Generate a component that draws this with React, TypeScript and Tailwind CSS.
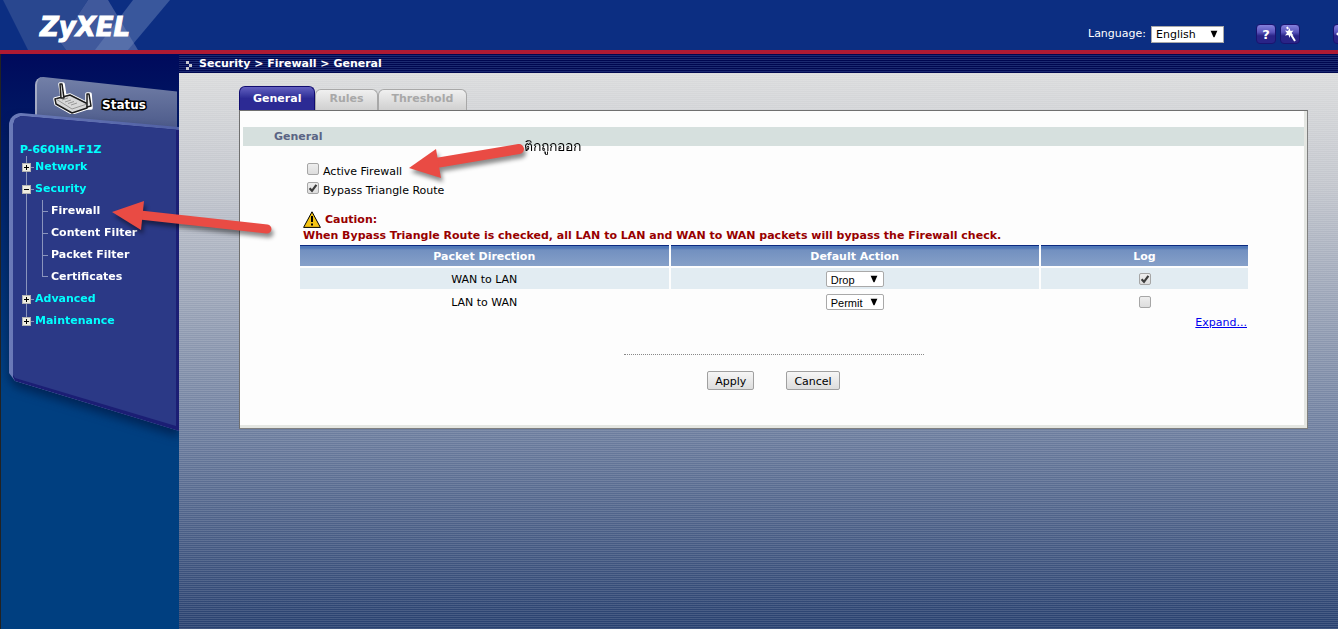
import { useState } from 'react';
import type { ReactNode, SelectHTMLAttributes } from 'react';

interface TreeItemProps {
  label: string;
  open?: boolean;
}

interface PacketRule {
  direction: string;
  action: string;
  log: boolean;
}

const RULES: PacketRule[] = [
  { direction: 'WAN to LAN', action: 'Drop', log: true },
  { direction: 'LAN to WAN', action: 'Permit', log: false },
];

const SECURITY_PAGES = ['Firewall', 'Content Filter', 'Packet Filter', 'Certificates'];

function Logo() {
  return (
    <a
      href="#home"
      className="relative mt-1 ml-10 text-[26px] leading-none font-bold italic text-white [-webkit-text-stroke:1px_white]"
    >
      ZyXEL
    </a>
  );
}

function HeaderButton({ label, children }: { label: string; children: ReactNode }) {
  return (
    <button
      type="button"
      aria-label={label}
      className="flex h-5 w-5 shrink-0 items-center justify-center rounded border border-[#1a1470] bg-linear-to-b from-[#8480dc] via-[#5a54bc] via-40% to-[#2a2488] to-60%"
    >
      {children}
    </button>
  );
}

function SelectBox({ className, ...props }: SelectHTMLAttributes<HTMLSelectElement>) {
  return (
    <span className="relative inline-flex">
      <select
        {...props}
        className={`appearance-none border border-[#a9a9a9] bg-white pl-1 text-black ${className}`}
      />
      <svg viewBox="0 0 8 7" className="pointer-events-none absolute top-1/2 right-[6px] h-[7px] w-2 -translate-y-1/2">
        <path d="M.5 0h7L4.400 7h-.8z" fill="black" />
      </svg>
    </span>
  );
}

function CheckBox({ id, label, defaultChecked }: { id: string; label?: string; defaultChecked?: boolean }) {
  return (
    <span className="relative inline-flex h-3 w-3 shrink-0">
      <input
        id={id}
        type="checkbox"
        aria-label={label}
        defaultChecked={defaultChecked}
        className="peer h-3 w-3 appearance-none rounded-xs border border-[#a6a6a6] bg-linear-to-b from-[#eeeeee] to-[#dddddd]"
      />
      <svg viewBox="0 0 12 12" className="pointer-events-none absolute inset-0 hidden h-3 w-3 peer-checked:block">
        <path d="M2.6 6.2 5 8.8 9.4 2.8" fill="none" stroke="#3c3c3c" strokeWidth="2.2" />
      </svg>
    </span>
  );
}

function RouterIcon() {
  return (
    <svg viewBox="0 0 42 32" className="h-8 w-[42px]">
      <g stroke="white" strokeWidth="3.6" strokeLinejoin="round">
        <path d="M7 2h3l2 13H9zM34 12h3l1 14h-4z" fill="white" />
        <path d="M2 17 17 13l18 9-1 4-15 5L3 22z" fill="white" />
      </g>
      <g stroke="#1c1c1c" strokeWidth="1.5" strokeLinejoin="round">
        <path d="M2 17 17 13l18 9-1 4-15 5L3 22z" fill="#d8d8d8" />
        <path d="M3 17l16 10 15-5" fill="none" stroke="#999" strokeWidth="1" />
        <path d="M7 2h2l2 14H8zM34 12h2l2 12-4 1z" fill="#e8e8e8" />
      </g>
      <path d="M9 18l6-2M12 20l6-2M15 21.500l6-2M18 23l6-2" stroke="#999" strokeWidth="1" />
    </svg>
  );
}

function TreeItem({ label, open }: TreeItemProps) {
  return (
    <a href={`#${label.toLowerCase()}`} className="flex h-[22px] items-center text-[#00ffff]">
      <svg viewBox="0 0 13 9" className="h-[9px] w-[13px]">
        <path d="M9 4.500h3" stroke="#8a94bd" />
        <rect x="0.500" y="0.500" width="8" height="8" fill="#efece0" stroke="#b4b4b4" />
        <path d={open ? 'M2 4.500h5' : 'M2 4.500h5M4.500 2v5'} stroke="black" />
      </svg>
      {label}
    </a>
  );
}

function Sidebar() {
  return (
    <aside className="w-[179px] shrink-0 overflow-hidden border-l border-[#222] bg-linear-to-b from-[#000a5c] to-[#003f80] to-[330px] pt-[23px]">
      {/* Status tab, tucked behind the menu panel */}
      <a
        href="#status"
        className="ml-[34px] flex h-[52px] w-[142px] items-start rounded-tl-lg border-l-2 border-[#a4abc4] bg-linear-to-b from-[#7380a8] to-[#4c5a8a] pt-[5px] pl-4 [clip-path:polygon(0_0,6%_0,100%_28%,100%_100%,0_100%)]"
      >
        <RouterIcon />
        <span className="mt-[14px] ml-[7px] text-[12px] font-bold text-white [-webkit-text-stroke:3px_black] [paint-order:stroke]">
          Status
        </span>
      </a>

      <div className="-mt-4 ml-2 drop-shadow-[0_6px_5px_rgba(0,20,60,0.6)]">
        <div className="rounded-tl-xl bg-linear-to-r from-[#6a7ab8] to-[#5060a4] [clip-path:polygon(0_0,12px_0,100%_14px,100%_100%,6px_calc(100%-50px),0_calc(100%-58px))]">
          <div className="ml-1 bg-[#1b1e74] [clip-path:polygon(0_12px,2px_6px,8px_3px,100%_17px,100%_100%,2px_calc(100%-50px),0_calc(100%-54px))]">
            <nav className="mr-[3px] h-[318px] bg-[#2b3986] pt-[29px] pl-[7px] text-[11px] leading-4 font-bold [clip-path:polygon(0_0,100%_0,100%_calc(100%-5px),2px_calc(100%-53px),0_calc(100%-56px))]">
              <p className="text-[#00ffff]">P-660HN-F1Z</p>
              <div className="relative -mt-0.5 ml-[2px] before:absolute before:top-0 before:bottom-[11px] before:left-1 before:w-px before:bg-[#8a94bd]">
                <div className="relative">
                  <TreeItem label="Network" />
                  <TreeItem label="Security" open />
                  <ul className="ml-5">
                    {SECURITY_PAGES.map((page) => (
                      <li key={page} className="group flex h-[22px] items-center">
                        <span className="flex h-full w-[6px] items-center border-l border-[#8a94bd] group-last:h-[11px] group-last:items-end group-last:self-start">
                          <span className="h-px w-full bg-[#8a94bd]" />
                        </span>
                        <a href={`#${page}`} className="ml-[3px] text-white">{page}</a>
                      </li>
                    ))}
                  </ul>
                  <TreeItem label="Advanced" />
                  <TreeItem label="Maintenance" />
                </div>
              </div>
            </nav>
          </div>
        </div>
      </div>
    </aside>
  );
}

function Header() {
  return (
    <header className="relative flex h-[54px] items-center overflow-hidden border-b-4 border-[#ae1a33] bg-[#0c2e82]">
      <svg viewBox="0 0 180 50" className="absolute top-0 left-0 h-[50px] w-[180px]">
        <path d="M3 0H88L60 42l6 8H28z" fill="#29478f" />
        <path d="M88 0h20l30 50H66l-6-8z" fill="#40599c" />
        <path d="M133 0h37l-42 50H95z" fill="#7189bd" opacity="0.45" />
      </svg>
      <Logo />
      <div className="mt-[18px] -mr-[15px] ml-auto flex items-center">
        <label htmlFor="language" className="mt-px mr-[5px] text-[11px] text-white">Language:</label>
        <SelectBox id="language" className="h-[17px] w-[73px] text-[11px]">
          <option>English</option>
        </SelectBox>
        <div className="ml-8 flex items-center gap-1">
          <HeaderButton label="Help">
            <span className="text-[13px] leading-none font-bold text-white">?</span>
          </HeaderButton>
          <HeaderButton label="Wizard">
            <svg viewBox="0 0 16 16" className="h-4 w-4 shrink-0">
              <path d="M7.500 2l1 3 3-.5-2 2.500 2 2.500-3-.5-1 3-1-3-3.500.5 2-2.500-2-2.500 3 .5z" fill="white" />
              <path d="M8 7l5 8M5 1l1 2" stroke="white" strokeWidth="2" />
            </svg>
          </HeaderButton>
        </div>
        <div className="ml-[33px]">
          <HeaderButton label="Logout">
            <svg viewBox="0 0 16 16" className="h-4 w-4 shrink-0">
              <path d="M1 8l6-5v3h7v4H7v3z" fill="white" />
            </svg>
          </HeaderButton>
        </div>
      </div>
    </header>
  );
}

function Tabs() {
  const [active, setActive] = useState('General');

  return (
    <div role="tablist" className="flex h-6 items-end text-[11px] font-bold">
      {['General', 'Rules', 'Threshold'].map((tab) => (
        <button
          key={tab}
          type="button"
          role="tab"
          aria-selected={tab === active}
          onClick={() => setActive(tab)}
          className={
            tab === active
              ? 'h-6 rounded-t-md border border-b-0 border-[#100c70] bg-linear-to-b from-[#6460c0] to-[#2c2a94] to-50% px-[13px] pt-0.5 text-white'
              : 'h-[21px] rounded-t-md border border-b-0 border-[#a8a8a8] bg-linear-to-b from-[#f0f0f0] to-[#d0d0d0] px-[13px] pb-0.5 text-[#a8a8a8]'
          }
        >
          {tab}
        </button>
      ))}
    </div>
  );
}

function FirewallPanel() {
  return (
    <section className="border border-t-[#707070] border-r-[#808080] border-b-[#808080] border-l-[#707070] bg-[#fdfdfd] px-[3px] pt-4 pb-[38px] shadow-[inset_-3px_-3px_0_#e4e6e2]">
      <h2 className="h-[19px] bg-[#d6e0de] pl-[31px] text-[11px] leading-[19px] font-bold text-[#5a6484]">General</h2>

      <div className="mr-14 ml-[57px] text-[11px]">
        <div className="mt-4 ml-[7px] flex h-[19px] items-start gap-1 pt-px leading-[18px]">
          <CheckBox id="active-firewall" />
          <label htmlFor="active-firewall">Active Firewall</label>
        </div>
        <div className="ml-[7px] flex h-[19px] items-start gap-1 pt-px leading-[18px]">
          <CheckBox id="bypass-route" defaultChecked />
          <label htmlFor="bypass-route">Bypass Triangle Route</label>
        </div>

        <div className="mt-[11px] ml-[3px] leading-4 font-bold text-[#980000]">
          <p className="flex items-center gap-1">
            <svg viewBox="0 0 18 17" className="h-[17px] w-[18px]">
              <path d="M9 .8 17.400 16.400H.6z" fill="#f4c414" stroke="black" strokeLinejoin="round" />
              <path d="M9 5v6M9 12.500v2" stroke="black" strokeWidth="2" />
            </svg>
            Caution:
          </p>
          <p>When Bypass Triangle Route is checked, all LAN to LAN and WAN to WAN packets will bypass the Firewall check.</p>
        </div>

        <table className="mt-px w-full table-fixed border-separate border-spacing-0 text-center">
          <thead>
            <tr className="text-white">
              {['Packet Direction', 'Default Action', 'Log'].map((title) => (
                <th
                  key={title}
                  className="h-[23px] border-r-2 border-b-2 border-[#fdfdfd] bg-[linear-gradient(#0c2a80_0_1px,#5078b8_1px_3px,#7290c0_5px,#86a0c8)] bg-clip-padding p-0 pt-[3px] last:w-[207px] last:border-r-0"
                >
                  {title}
                </th>
              ))}
            </tr>
          </thead>
          <tbody>
            {RULES.map((rule) => (
              <tr key={rule.direction} className="odd:bg-[#e2ecf2] *:h-[23px] *:border-r-2 *:border-b-2 *:border-[#fdfdfd] *:p-0 *:last:border-r-0">
                <td>
                  <div className="pt-[3px]">{rule.direction}</div>
                </td>
                <td>
                  <div className="flex justify-center">
                    <SelectBox
                      aria-label={`${rule.direction} default action`}
                      defaultValue={rule.action}
                      className="h-4 w-[58px] rounded-xs font-['Liberation_Sans',sans-serif] text-[11px]"
                    >
                      <option>Drop</option>
                      <option>Permit</option>
                    </SelectBox>
                  </div>
                </td>
                <td>
                  <div className="flex justify-center">
                    <CheckBox id={`log-${rule.action}`} label={`Log ${rule.direction}`} defaultChecked={rule.log} />
                  </div>
                </td>
              </tr>
            ))}
          </tbody>
        </table>

        <div className="mt-px flex h-4 justify-end pr-px leading-4">
          <a href="#expand" className="text-[#0000ee] underline">Expand...</a>
        </div>
      </div>

      <div className="mx-auto mt-[23px] w-[300px] border-t border-dotted border-[#888]" />
      <div className="mt-4 flex justify-center gap-8 text-[11px]">
        <button type="button" className="h-[19px] rounded-xs border border-[#a0a0a0] bg-linear-to-b from-[#f6f6f6] to-[#dddddd] px-[7px] pt-0.5">
          Apply
        </button>
        <button type="button" className="h-[19px] rounded-xs border border-[#a0a0a0] bg-linear-to-b from-[#f6f6f6] to-[#dddddd] px-[7px] pt-0.5">
          Cancel
        </button>
      </div>
    </section>
  );
}

// Hand-placed notes that float over the page
function Annotations() {
  return (
    <div className="pointer-events-none absolute top-0 left-0">
      <svg viewBox="0 0 540 250" className="h-[250px] w-[540px] drop-shadow-[2px_4px_2px_rgba(0,0,0,0.45)]">
        <g fill="#e94b44" stroke="#e94b44">
          <path d="M436 163 519 149" strokeWidth="10" strokeLinecap="round" />
          <path d="M409 168 436 149l5 29z" stroke="none" />
          <path d="M140 215 267 229" strokeWidth="9" strokeLinecap="round" />
          <path d="M112 212 144 201l-3 29z" stroke="none" />
        </g>
      </svg>
      <span className="absolute top-[136px] left-[524px] text-[14px] leading-5 font-medium whitespace-nowrap text-black">ติกถูกออก</span>
    </div>
  );
}

export default function App() {
  return (
    <div className="relative flex min-h-screen flex-col overflow-hidden font-['DejaVu_Sans',Verdana,sans-serif] text-black">
      <Header />
      <div className="flex flex-1">
        <Sidebar />
        <div className="flex min-w-0 flex-1 flex-col">
          <div className="flex h-[19px] items-center bg-[repeating-linear-gradient(#000750_0_1px,#1c2a70_1px_2px)] pt-px pl-[7px] text-[11px] font-bold text-white">
            <svg viewBox="0 0 7 9" className="mt-0.5 mr-[6px] h-[9px] w-[7px]" fill="#c8c8d0">
              <path d="M0 0h3v3H0zM3 3h3v3H3zM0 6h3v3H0z" />
            </svg>
            Security &gt; Firewall &gt; General
          </div>
          <main className="flex-1 bg-[repeating-linear-gradient(transparent_0_1px,rgba(255,255,255,0.13)_1px_2px),linear-gradient(#dadbdc,#c3c6cd_20%,#6c7d9e_65%,#28406f)] pt-[13px] pr-[30px] pl-[60px]">
            <Tabs />
            <FirewallPanel />
          </main>
        </div>
      </div>
      <Annotations />
    </div>
  );
}
